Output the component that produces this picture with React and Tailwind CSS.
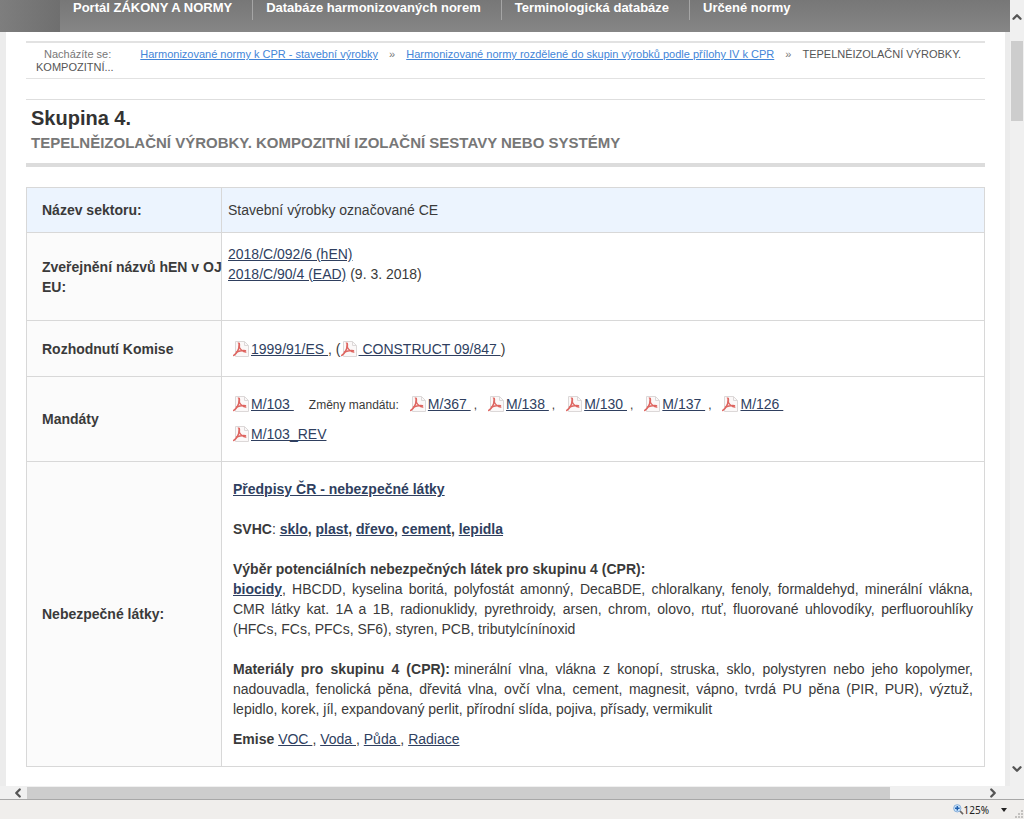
import { ChevronDown, ChevronLeft, ChevronRight, ChevronUp } from "lucide-react";

const menu = [
  "Portál ZÁKONY A NORMY",
  "Databáze harmonizovaných norem",
  "Terminologická databáze",
  "Určené normy",
];

const mandateChanges = ["M/367", "M/138", "M/130", "M/137", "M/126"];

const svhc = ["sklo", "plast", "dřevo", "cement", "lepidla"];

const emissions = ["VOC", "Voda", "Půda", "Radiace"];

const PdfIcon = () => (
  <svg
    viewBox="0 0 16 16"
    className="inline-block w-4 h-4 mr-0.5 align-[-3px]"
    fill="none"
    aria-hidden="true"
  >
    <path
      d="M2.5 .5H11.5L15.5 4.5V15.5H2.5Z"
      fill="#fbf8f8"
      stroke="#dcd8d8"
      strokeLinejoin="round"
    />
    <path d="M11.5 .5V4.5H15.5" stroke="#dcd8d8" />
    <path d="M4.8 2C6.8 1.6 7 4.5 5.8 8" stroke="#e88a86" strokeWidth="1.4" />
    <path
      d="M6.2 2.5C6.4 6.2 4.6 11.4 .8 14.4"
      stroke="#de6560"
      strokeWidth="1.6"
      strokeLinecap="round"
    />
    <path
      d="M6.4 6.2C7.6 8.6 9.8 10.6 12.8 11.2M3.4 11.2C6 9.9 9 9.2 12.6 9.6"
      stroke="#de6560"
      strokeWidth="1.3"
      strokeLinecap="round"
    />
  </svg>
);

const DocLink = ({ children, className = "" }) => (
  <a href="#" className={`text-[#2f3f5f] underline ${className}`}>
    {children}
  </a>
);

const PdfLink = ({ children }) => (
  <span className="whitespace-pre">
    <PdfIcon />
    <DocLink>{children}</DocLink>
  </span>
);

const Row = ({ label, highlight, className = "", children }) => (
  <tr className={highlight ? "bg-[#ecf4fe]" : ""}>
    <th
      scope="row"
      className={`w-[195px] border border-[#d8d8d8] pl-[15px] text-left align-middle font-bold whitespace-pre ${
        highlight ? "" : "bg-[#fbfbfb]"
      }`}
    >
      {label}
    </th>
    <td className={`border border-[#d8d8d8] ${className}`}>{children}</td>
  </tr>
);

const Header = () => (
  <header className="flex h-8 bg-linear-to-b from-[#777777] to-[#868686]">
    <div className="w-[60px] bg-linear-to-r from-[#7e7e7e] to-[#6f6f6f]" />
    <nav className="flex h-5">
      {menu.map((item, index) => (
        <a
          key={item}
          href="#"
          className={`pl-[13px] pr-5 text-[13px] leading-[15px] font-bold text-white ${
            index > 0 && "border-l border-[#a5a5a5]"
          }`}
        >
          {item}
        </a>
      ))}
    </nav>
  </header>
);

const Breadcrumbs = () => (
  <nav className="border-t-2 border-b border-[#e2e2e2] pt-[5px] pb-1 pl-[10px] indent-2 text-[11px] leading-[13px] text-[#555555]">
    <span className="text-[#777777]">Nacházíte se:</span>
    <a href="#" className="ml-[29px] text-[#4385d8] underline">
      Harmonizované normy k CPR - stavební výrobky
    </a>
    <span className="mx-[11px] text-[#777777]">»</span>
    <a href="#" className="text-[#4385d8] underline">
      Harmonizované normy rozdělené do skupin výrobků podle přílohy IV k CPR
    </a>
    <span className="mx-[11px] text-[#777777]">»</span>
    TEPELNĚIZOLAČNÍ VÝROBKY. KOMPOZITNÍ...
  </nav>
);

const SectorTable = () => (
  <table className="w-full table-fixed border-collapse text-sm leading-5 text-[#3a3a3a]">
    <tbody>
      <Row label="Název sektoru:" highlight className="h-[45px] pl-1.5">
        Stavební výrobky označované CE
      </Row>
      <Row
        label={"Zveřejnění názvů hEN v OJ\nEU:"}
        className="h-[88px] pt-[11px] pl-1.5 align-top"
      >
        <DocLink>2018/C/092/6 (hEN)</DocLink>
        <br />
        <DocLink>2018/C/90/4 (EAD)</DocLink> (9. 3. 2018)
      </Row>
      <Row label="Rozhodnutí Komise" className="h-14 pl-[11px]">
        <PdfLink>{"1999/91/ES "}</PdfLink>, (
        <PdfLink>{" CONSTRUCT 09/847 "}</PdfLink>)
      </Row>
      <Row label="Mandáty" className="h-[85px] pl-[11px] leading-[30px]">
        <PdfLink>{"M/103 "}</PdfLink>
        <span className="mx-[11px] pl-1 text-xs">Změny mandátu:</span>
        {mandateChanges.map((mandate, index) => (
          <span key={mandate}>
            <PdfLink>{`${mandate} `}</PdfLink>
            {index < mandateChanges.length - 1 && (
              <span className="mr-[11px] pl-[3px] text-xs">,</span>
            )}
          </span>
        ))}
        <br />
        <PdfLink>M/103_REV</PdfLink>
      </Row>
      <Row label="Nebezpečné látky:" className="px-[11px] py-[17px]">
        <p className="mb-5 font-bold">
          <DocLink>Předpisy ČR - nebezpečné látky</DocLink>
        </p>
        <p className="mb-5">
          <strong>SVHC</strong>:{" "}
          {svhc.map((item, index) => (
            <strong key={item}>
              <DocLink>{item}</DocLink>
              {index < svhc.length - 1 && ", "}
            </strong>
          ))}
        </p>
        <p className="mb-5 text-justify">
          <strong>
            Výběr potenciálních nebezpečných látek pro skupinu 4 (CPR):
          </strong>
          <br />
          <DocLink className="font-bold">biocidy</DocLink>, HBCDD, kyselina
          boritá, polyfostát amonný, DecaBDE, chloralkany, fenoly, formaldehyd,
          minerální vlákna, CMR látky kat. 1A a 1B, radionuklidy, pyrethroidy,
          arsen, chrom, olovo, rtuť, fluorované uhlovodíky, perfluorouhlíky
          (HFCs, FCs, PFCs, SF6), styren, PCB, tributylcínínoxid
        </p>
        <p className="mb-[10px] text-justify">
          <strong className="mr-1">Materiály pro skupinu 4 (CPR):</strong>
          minerální vlna, vlákna z konopí, struska, sklo, polystyren nebo jeho
          kopolymer, nadouvadla, fenolická pěna, dřevitá vlna, ovčí vlna,
          cement, magnesit, vápno, tvrdá PU pěna (PIR, PUR), výztuž, lepidlo,
          korek, jíl, expandovaný perlit, přírodní slída, pojiva, přísady,
          vermikulit
        </p>
        <p className="whitespace-pre">
          <strong>Emise</strong>{" "}
          {emissions.map((item, index) => (
            <span key={item}>
              <DocLink>
                {index < emissions.length - 1 ? `${item} ` : item}
              </DocLink>
              {index < emissions.length - 1 && ", "}
            </span>
          ))}
        </p>
      </Row>
    </tbody>
  </table>
);

const VerticalScrollbar = () => (
  <div className="flex w-[14px] flex-col items-center bg-[#f0f0f0] text-[#555555]">
    <button
      aria-label="Nahoru"
      className="flex h-[41px] items-start justify-center pt-2.5"
    >
      <ChevronUp size={14} strokeWidth={4} />
    </button>
    <div className="h-20 w-3 bg-[#cdcdcd]" />
    <button aria-label="Dolů" className="mt-auto pb-2.5">
      <ChevronDown size={14} strokeWidth={4} />
    </button>
  </div>
);

const HorizontalScrollbar = () => (
  <div className="flex h-[13px] items-center bg-[#f0f0f0] pr-6 text-[#555555]">
    <button aria-label="Vlevo" className="flex w-[27px] justify-center pl-2">
      <ChevronLeft size={14} strokeWidth={4} />
    </button>
    <div className="flex-1">
      <div className="h-3 w-[90%] bg-[#cdcdcd]" />
    </div>
    <button aria-label="Vpravo">
      <ChevronRight size={14} strokeWidth={4} />
    </button>
  </div>
);

const StatusBar = () => (
  <footer className="flex h-5 items-center justify-end border-t border-[#a8a8a8] bg-[#f0eeec] pr-px">
    <button className="flex items-center font-['Noto_Sans',sans-serif] text-[10px] leading-3 text-[#222222]">
      <svg viewBox="0 0 12 12" className="w-[11px] h-[11px]" fill="none">
        <path d="M7 7L11 11" stroke="#6b6460" strokeWidth="1.8" />
        <circle cx="4.7" cy="4.7" r="4" fill="#cfe6fb" stroke="#7fa9d6" />
        <path d="M2.2 4.7H7.2M4.7 2.2V7.2" stroke="#1f5fae" strokeWidth="1.6" />
      </svg>
      125%
      <svg viewBox="0 0 6 4" className="ml-3 h-1 w-1.5">
        <path d="M0 0H6L3 4Z" fill="#222222" />
      </svg>
    </button>
    <svg viewBox="0 0 8 8" className="mt-2 ml-2 h-2 w-2" fill="#c3c1bf">
      <path d="M6 0h2v2H6zM3 3h2v2H3zM6 3h2v2H6zM0 6h2v2H0zM3 6h2v2H3zM6 6h2v2H6z" />
    </svg>
  </footer>
);

const App = () => (
  <div className="flex min-h-screen flex-col bg-white font-['Liberation_Sans',Arial,sans-serif]">
    <div className="flex flex-1">
      <div className="flex min-w-0 flex-1 flex-col">
        <Header />
        <div className="flex-1 border-l-[6px] border-r-[5px] border-[#ececec] bg-white px-5 pt-[9px] pb-[18px]">
          <Breadcrumbs />
          <div className="mt-5 border-t border-b-4 border-t-[#dedede] border-b-[#dcdcdc] pt-1.5 pb-[10px] pl-[5px]">
            <h1 className="text-xl leading-6 font-bold text-[#333333]">
              Skupina 4.
            </h1>
            <h2 className="pt-[3px] text-[15px] leading-5 font-bold text-[#777777]">
              TEPELNĚIZOLAČNÍ VÝROBKY. KOMPOZITNÍ IZOLAČNÍ SESTAVY NEBO SYSTÉMY
            </h2>
          </div>
          <div className="pt-5">
            <SectorTable />
          </div>
        </div>
      </div>
      <VerticalScrollbar />
    </div>
    <HorizontalScrollbar />
    <StatusBar />
  </div>
);

export default App;
